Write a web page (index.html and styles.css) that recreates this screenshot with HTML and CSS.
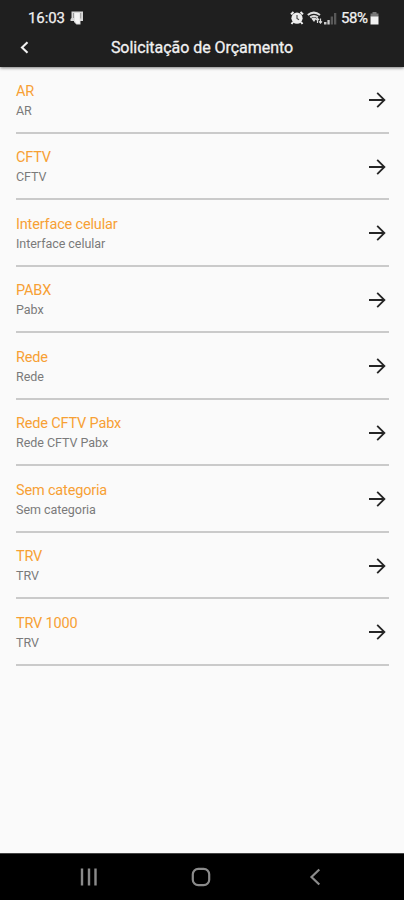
FILE: index.html
```html
<!DOCTYPE html>
<html lang="pt-BR">
<head>
<meta charset="utf-8">
<title>Solicitação de Orçamento</title>
<link rel="stylesheet" href="styles.css">
</head>
<body>
<svg class="defs" aria-hidden="true"><symbol id="arrow" viewBox="0 0 18 18"><path d="M1 9H16M9.2 1.8L16.4 9L9.2 16.2" fill="none" stroke="#252525" stroke-width="1.8"/></symbol></svg>
<div class="screen">
  <header class="header">
    <div class="status">
      <span class="time">16:03</span>
      <svg class="note" width="14" height="14" viewBox="0 0 14 14"><path d="M1.5 0.5H13V10H10.5V13.5H6.5L4 11V10H.5V8L1.5 7Z" fill="#d8d8d8"/><path d="M4.5 2H9.7V12.5H6.8L4.8 9.5Z" fill="#f5f5f5"/><path d="M3.5 2V7M10.7 2V7.5" stroke="#999" stroke-width="1"/></svg>
      <span class="fill"></span>
      <svg class="alarm" width="14" height="14" viewBox="0 0 14 14"><path d="M1 3.4L3.5 1M13 3.4L10.5 1M3 11L1.5 13M11 11L12.5 13" stroke="#eee" stroke-width="2"/><circle cx="7" cy="7.2" r="5.6" fill="#eee"/><path d="M7 4V7.5L9 8.7" fill="none" stroke="#444" stroke-width="1.1"/></svg>
      <svg class="wifi" width="16" height="14" viewBox="0 0 16 14"><path d="M.8 4Q6.8-.8 13 4M3.2 6.4Q7 3.5 10.8 6.4" fill="none" stroke="#ddd" stroke-width="2"/><path d="M4.3 7.6Q7 5.6 9.4 7.6L7 11Z" fill="#ddd"/><path d="M10.5 12V7.5M8.9 9L10.5 7.3L12 9M13.5 7.5V12M12 10.3L13.5 12L15 10.3" fill="none" stroke="#ddd" stroke-width="1.2"/></svg>
      <svg class="signal" width="13" height="13" viewBox="0 0 13 13"><path d="M0 12.5V10H2.5V12.5ZM3.4 12.5V8H5.7V12.5Z" fill="#ccc"/><path d="M6.7 12.5V4.5H9V12.5ZM10 12.5V1H12.3V12.5Z" fill="#585858"/></svg>
      <span class="percent">58%</span>
      <svg class="battery" width="9" height="13" viewBox="0 0 9 13"><path d="M2.5 0H6.5V1.5H8.5V5H.5V1.5H2.5Z" fill="#777"/><path d="M.5 4.5H8.5V12.5H.5Z" fill="#f2f2f2"/></svg>
    </div>
    <div class="bar">
      <svg class="back" width="9" height="13" viewBox="0 0 9 13"><path d="M7.5 1.2L2 6.5L7.5 11.8" fill="none" stroke="#f1f1f1" stroke-width="2.1"/></svg>
      <h1>Solicitação de Orçamento</h1>
    </div>
  </header>
  <main class="list">
    <div class="row"><div><h2>AR</h2><p>AR</p></div><svg class="arrow"><use href="#arrow"/></svg></div>
    <div class="row"><div><h2>CFTV</h2><p>CFTV</p></div><svg class="arrow"><use href="#arrow"/></svg></div>
    <div class="row"><div><h2>Interface celular</h2><p>Interface celular</p></div><svg class="arrow"><use href="#arrow"/></svg></div>
    <div class="row"><div><h2>PABX</h2><p>Pabx</p></div><svg class="arrow"><use href="#arrow"/></svg></div>
    <div class="row"><div><h2>Rede</h2><p>Rede</p></div><svg class="arrow"><use href="#arrow"/></svg></div>
    <div class="row"><div><h2>Rede CFTV Pabx</h2><p>Rede CFTV Pabx</p></div><svg class="arrow"><use href="#arrow"/></svg></div>
    <div class="row"><div><h2>Sem categoria</h2><p>Sem categoria</p></div><svg class="arrow"><use href="#arrow"/></svg></div>
    <div class="row"><div><h2>TRV</h2><p>TRV</p></div><svg class="arrow"><use href="#arrow"/></svg></div>
    <div class="row"><div><h2>TRV 1000</h2><p>TRV</p></div><svg class="arrow"><use href="#arrow"/></svg></div>
  </main>
  <nav class="nav">
    <svg width="18" height="18" viewBox="0 0 18 18"><path d="M2 .5V17.5M9 .5V17.5M15.5 .5V17.5" stroke="#8b8b8b" stroke-width="2.4"/></svg>
    <svg width="20" height="20" viewBox="0 0 20 20"><rect x="1.8" y="1.8" width="16.4" height="16.4" rx="5.5" fill="none" stroke="#8b8b8b" stroke-width="2.2"/></svg>
    <svg width="12" height="18" viewBox="0 0 12 18"><path d="M10.3 1.5L2.5 9L10.3 16.5" fill="none" stroke="#8b8b8b" stroke-width="2.2"/></svg>
  </nav>
</div>
</body>
</html>
```
FILE: styles.css
```css
* { box-sizing: border-box; }
body { margin: 0; font-family: Roboto, sans-serif; background: #fafafa; }
h1, h2, p { margin: 0; font-weight: 400; }
svg { display: block; flex: none; }
.defs { display: none; }
.screen { height: 900px; display: flex; flex-direction: column; }
.header { height: 67px; background: #1f1f1f; color: #f1f1f1; box-shadow: 0 1px 3px rgba(0, 0, 0, .5); }
.status { height: 35px; padding: 1px 25px 0 28px; display: flex; align-items: center; font-size: 15px; line-height: 18px; -webkit-text-stroke: .25px #f1f1f1; }
.time { width: 36px; letter-spacing: -.1px; }
.note { margin-left: 6px; }
.fill { flex: 1; }
.alarm { margin-right: -1px; }
.wifi { margin-left: 4px; }
.signal { margin-left: 1px; }
.percent { width: 28px; margin-left: 4px; letter-spacing: -.4px; }
.battery { margin-left: 1px; }
.bar { height: 25px; padding: 0 20px; display: grid; grid-template-columns: 9px 1fr 9px; align-items: center; }
h1 { text-align: center; font-size: 16px; line-height: 20px; white-space: nowrap; letter-spacing: -.04px; -webkit-text-stroke: .3px #f1f1f1; }
.list { flex: 1; padding: 0 15px 0 16px; }
.row { height: 66.5px; padding: 14px 3px 0 0; display: flex; justify-content: space-between; border-bottom: 2px solid #cacaca; }
h2 { padding-top: .6px; font-size: 14.5px; line-height: 20px; letter-spacing: -.17px; color: #f7a034; }
p { margin-top: -1.1px; font-size: 12.5px; line-height: 19px; letter-spacing: -.04px; color: #7a7a7a; }
.arrow { width: 18px; height: 18px; margin-top: 10px; }
.nav { height: 47px; background: #000; border-top: 1px solid #444; display: grid; grid-template-columns: 177px 48px 179px; align-items: center; justify-items: center; }
```
